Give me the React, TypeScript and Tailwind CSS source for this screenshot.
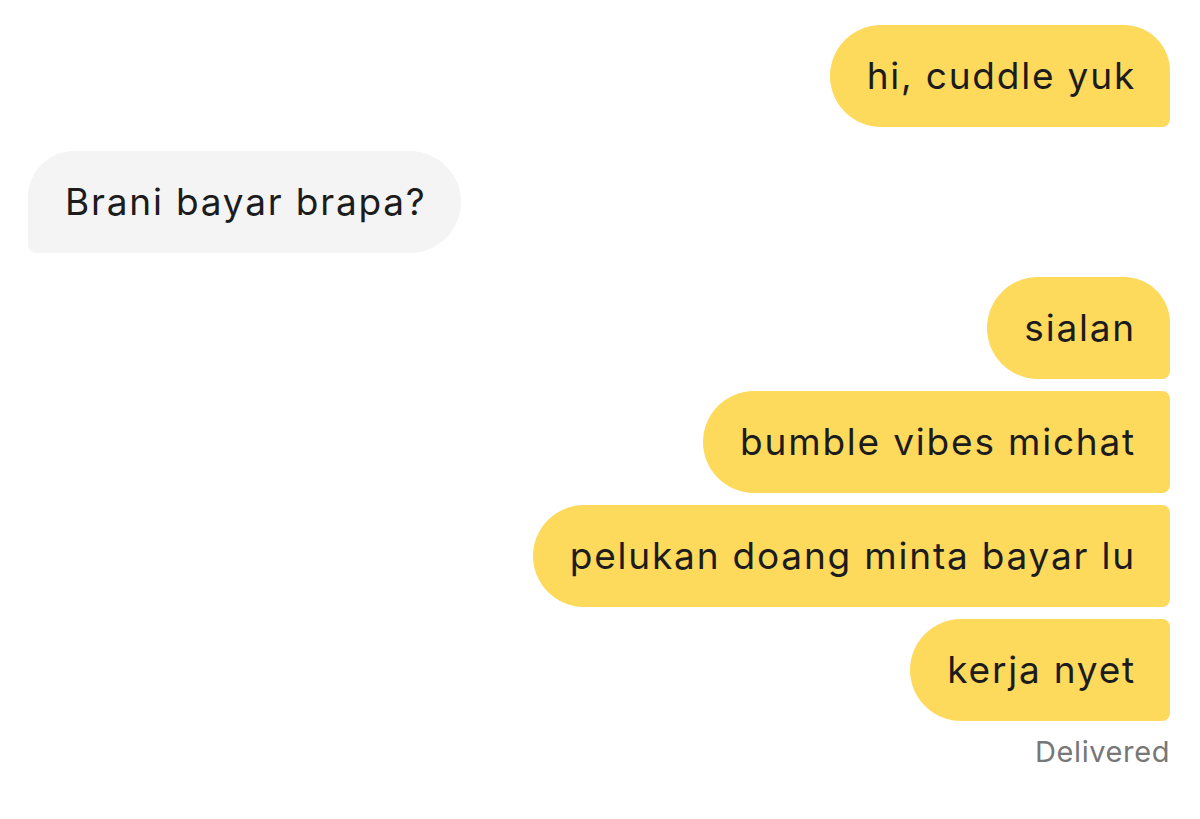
const messages = [
  { text: "hi, cuddle yuk", mine: true, shape: "rounded-l-[51px] rounded-tr-[46px] rounded-br-[8px]", gap: "" },
  { text: "Brani bayar brapa?", mine: false, shape: "rounded-r-[51px] rounded-tl-[46px] rounded-bl-[8px]", gap: "mt-6" },
  { text: "sialan", mine: true, shape: "rounded-l-[51px] rounded-tr-[46px] rounded-br-[8px]", gap: "mt-6" },
  { text: "bumble vibes michat", mine: true, shape: "rounded-l-[51px] rounded-r-[8px]", gap: "mt-3" },
  { text: "pelukan doang minta bayar lu", mine: true, shape: "rounded-l-[51px] rounded-r-[8px]", gap: "mt-3" },
  { text: "kerja nyet", mine: true, shape: "rounded-l-[51px] rounded-r-[8px]", gap: "mt-3" },
];

const App = () => {
  return (
    <div
      className="bg-white min-h-screen w-full pt-[25px] pl-[28px] pr-[30px]"
      style={{ fontFamily: "Inter, 'Noto Sans', sans-serif" }}
    >
      <div className="flex flex-col">
        {messages.map((m, i) => (
          <div
            key={i}
            className={`flex ${m.mine ? "justify-end" : "justify-start"} ${m.gap}`}
          >
            <div
              className={`h-[102px] flex items-center pl-[37px] pr-[34px] text-[37px] text-[#1c1c1c] tracking-[1.8px] ${
                m.mine ? "bg-[#fdd95c]" : "bg-[#f4f4f4]"
              } ${m.shape}`}
            >
              {m.text}
            </div>
          </div>
        ))}
        <div className="flex justify-end mt-[9px]">
          <span className="text-[29px] text-[#777777] tracking-[0.6px]">Delivered</span>
        </div>
      </div>
    </div>
  );
};

export default App;
